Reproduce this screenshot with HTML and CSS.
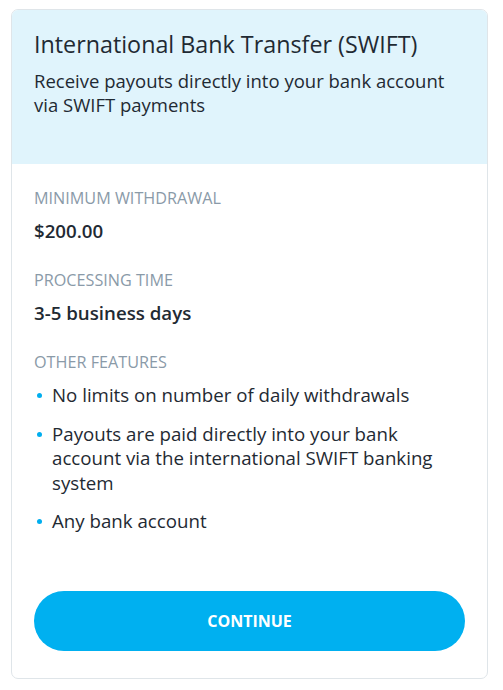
FILE: index.html
```html
<!DOCTYPE html>
<html lang="en">
<head>
    <meta charset="UTF-8">
    <meta name="viewport" content="width=device-width, initial-scale=1.0">
    <title>Withdrawal Method</title>
    <link rel="stylesheet" href="styles.css">
</head>
<body>
    <!-- Payout method card -->
    <div class="card">
        <div class="card-head">
            <h2>International Bank Transfer (SWIFT)</h2>
            <p>Receive payouts directly into your bank account via SWIFT payments</p>
        </div>

        <div class="card-body">
            <div class="label">Minimum withdrawal</div>
            <div class="value">$200.00</div>

            <div class="label">Processing time</div>
            <div class="value">3-5 business days</div>

            <div class="label">Other features</div>
            <ul class="features">
                <li>No limits on number of daily withdrawals</li>
                <li>Payouts are paid directly into your bank account via the international SWIFT banking system</li>
                <li>Any bank account</li>
            </ul>

            <button class="continue">Continue</button>
        </div>
    </div>
</body>
</html>
```

FILE: styles.css
```css
body {
    font-family: "Open Sans", Arial, sans-serif;
    margin: 0;
    padding: 9px 15px 0 11px;
    background-color: #fff;
    color: #1f2a33;
}
.card {
    border: 1px solid #dfe5e9;
    border-radius: 7px;
    overflow: hidden;
}
.card-head {
    background-color: #e0f4fc;
    padding: 18px 22px 0;
    height: 136px;
}
.card-head h2 {
    margin: 0;
    font-size: 23.3px;
    font-weight: 400;
    line-height: 32px;
}
.card-head p {
    margin: 9px 0 0;
    font-size: 18.5px;
    line-height: 24px;
}
.card-body {
    padding: 23px 22px 27px;
}
.label {
    text-transform: uppercase;
    color: #8a9aa8;
    font-size: 16.2px;
    line-height: 22px;
}
.value {
    font-size: 18.7px;
    font-weight: 600;
    line-height: 24px;
    margin: 10px 0 26px;
}
.features {
    list-style: none;
    margin: 10px 0 0;
    padding: 0;
}
.features li {
    position: relative;
    padding-left: 18px;
    font-size: 18.7px;
    line-height: 24.5px;
    margin-bottom: 14px;
}
.features li::before {
    content: "";
    position: absolute;
    left: 3px;
    top: 10px;
    width: 5px;
    height: 5px;
    border-radius: 50%;
    background-color: #00aeef;
}
.continue {
    display: block;
    width: 100%;
    height: 60px;
    margin-top: 57px;
    border: none;
    border-radius: 30px;
    background-color: #00b0f0;
    color: #fff;
    font-family: inherit;
    font-size: 16px;
    font-weight: 700;
    text-transform: uppercase;
    cursor: pointer;
}
```
